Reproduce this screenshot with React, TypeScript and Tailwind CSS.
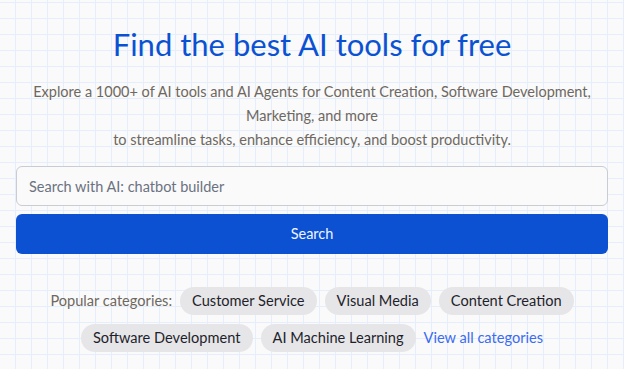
const CATEGORIES = ["Customer Service", "Visual Media", "Content Creation", "Software Development", "AI Machine Learning"];

export default function App() {
  return (
    <div
      className="min-h-[369px] w-full bg-[#fafafa] bg-[linear-gradient(to_right,#e4eefc_1px,transparent_1px),linear-gradient(to_bottom,#e4eefc_1px,transparent_1px)] bg-[size:16px_16px] bg-[position:15px_2px] px-4 pt-[26px] font-['Lato',sans-serif]"
    >
      <div className="mx-auto flex w-full flex-col items-center">
        <h1 className="text-center text-[31px] leading-9 font-normal text-[#0b52d3]">Find the best AI tools for free</h1>
        <p className="mt-[18px] text-center text-[14.5px] leading-6 text-[#6e6861]">
          Explore a 1000+ of AI tools and AI Agents for Content Creation, Software Development, Marketing, and more
          <br />
          to streamline tasks, enhance efficiency, and boost productivity.
        </p>

        <input
          type="text"
          placeholder="Search with AI: chatbot builder"
          className="mt-[14px] h-10 w-full rounded-md border border-[#c9ccd2] bg-[#fafafa] px-3 text-[14.5px] text-[#374151] placeholder:text-[#6b7280] outline-none"
        />
        <button className="mt-2 h-10 w-full rounded-md bg-[#0b51d1] text-[14.5px] text-[#f1f4ff]">Search</button>

        <div className="mt-[33px] flex w-full flex-wrap items-center justify-center gap-x-2 gap-y-[9px] text-[14.6px]">
          <span className="text-[#6e6861]">Popular categories:</span>
          {CATEGORIES.map((c) => (
            <span key={c} className="rounded-full bg-[#e6e6e9] px-3 py-[5px] leading-[18px] text-[#1f1f2b]">
              {c}
            </span>
          ))}
          <a href="#" className="text-[#3b6cf0]">View all categories</a>
        </div>
      </div>
    </div>
  );
}
